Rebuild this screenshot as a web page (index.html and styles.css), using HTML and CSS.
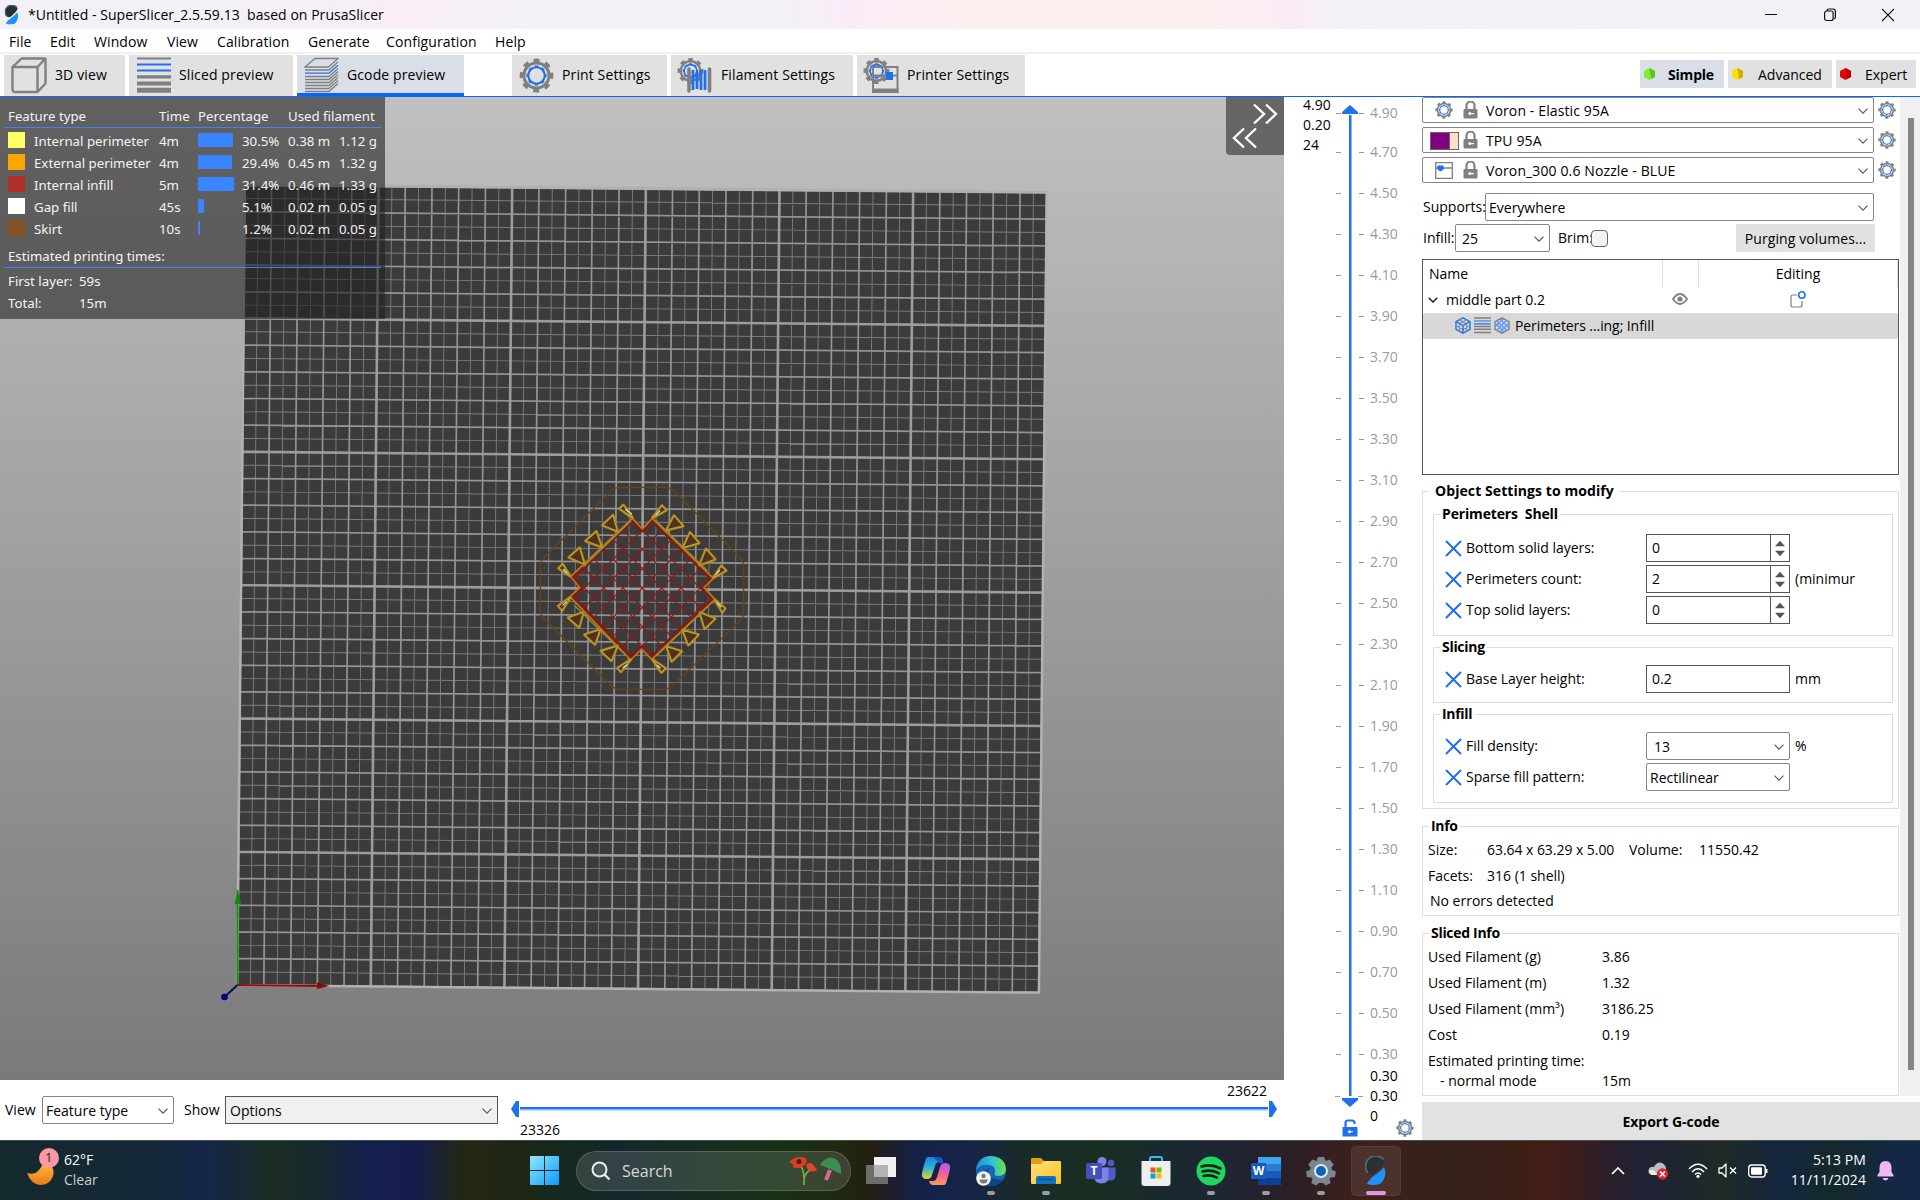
FILE: index.html
```html
<!DOCTYPE html>
<html lang="en">
<head>
<meta charset="utf-8">
<title>*Untitled - SuperSlicer_2.5.59.13 based on PrusaSlicer</title>
<link rel="stylesheet" href="styles.css">
</head>
<body>
<svg class="sprite" width="0" height="0">
  <defs>
    <symbol id="gear" viewBox="0 0 34 34">
      <circle cx="17" cy="17" r="14.6" fill="none" stroke="#808080" stroke-width="3.6" stroke-dasharray="5.6 5.867" transform="rotate(-101 17 17)"/>
      <circle cx="17" cy="17" r="12.2" fill="none" stroke="#808080" stroke-width="3"/>
      <circle cx="17" cy="17" r="8" fill="none" stroke="#1f70ee" stroke-width="2"/>
      <circle cx="17" cy="17" r="9" fill="none" stroke="#1f70ee" stroke-width="1.6" stroke-dasharray="3.4 3.669" transform="rotate(-101 17 17)"/>
    </symbol>
    <symbol id="lock" viewBox="0 0 15 18">
      <path d="M3.5 8V4.5a4 4 0 0 1 8 0V8" fill="none" stroke="#808080" stroke-width="2.2"/>
      <rect x="0.5" y="8" width="14" height="9.5" rx="1" fill="#808080"/>
      <circle cx="6.8" cy="12.6" r="1.5" fill="#fff"/><path d="M7 12h4v1.2H7z" fill="#fff"/>
    </symbol>
    <symbol id="chev" viewBox="0 0 10 6"><path d="M.5.7 5 5.2 9.500.7" fill="none" stroke="#555" stroke-width="1.1"/></symbol>
    <symbol id="cross" viewBox="0 0 17 17"><path d="M1 1l15 15M16 1 1 16" fill="none" stroke="#1f70ee" stroke-width="2"/></symbol>
    <symbol id="logo" viewBox="0 0 22 30">
      <path d="M18.500 3.500A9.300 9.300 0 0 0 3 17q4 3.500 9-2 5-4 7.500-9z" fill="#2d2f33"/>
      <path d="M18.500 3.500A9.300 9.300 0 0 0 3 17" fill="none" stroke="#4d6f80" stroke-width="1.600"/>
      <path d="M19 11q4 10-4 17-7 2-13 0 2-5 8-9 6-4 9-8z" fill="#1f93f7"/>
    </symbol>
    <symbol id="hex" viewBox="0 0 16 17">
      <path d="M8 .8 15 4.700v7.600L8 16.200 1 12.300V4.700z" fill="#d5dceb" stroke="#1f70ee" stroke-width="1.400"/>
      <path d="M4.500 2.800l7 4v7.400M11.500 2.800l-7 4v7.400M1 8.500l7 4 7-4" fill="none" stroke="#8b8b8b" stroke-width="1.200"/>
      <path d="M1 4.700 8 8.500l7-3.800M8 8.500v7.700" fill="none" stroke="#1f70ee" stroke-width="1.400"/>
    </symbol>
    <linearGradient id="win" x1="0" y1="0" x2="1" y2="1"><stop offset="0" stop-color="#8fe6ff"/><stop offset="1" stop-color="#0a9bff"/></linearGradient>
    <linearGradient id="moon" x1="0" y1="0" x2="0" y2="1"><stop offset="0" stop-color="#f7c443"/><stop offset="1" stop-color="#f1781b"/></linearGradient>
    <linearGradient id="fold" x1="0" y1="0" x2="1" y2="1"><stop offset="0" stop-color="#ffe07a"/><stop offset="1" stop-color="#ffc125"/></linearGradient>
    <linearGradient id="cpa" x1="0" y1="0" x2="0" y2="1"><stop offset="0" stop-color="#1d7fe8"/><stop offset=".5" stop-color="#2fb6d0"/><stop offset="1" stop-color="#f2d324"/></linearGradient>
    <linearGradient id="cpb" x1="0" y1="0" x2="0" y2="1"><stop offset="0" stop-color="#a95cf0"/><stop offset=".5" stop-color="#f0609a"/><stop offset="1" stop-color="#fb9a5a"/></linearGradient>
    <linearGradient id="edg" x1="0" y1="0" x2="1" y2="0"><stop offset="0" stop-color="#1b8fdc"/><stop offset=".55" stop-color="#2fc5cf"/><stop offset="1" stop-color="#6fe04a"/></linearGradient>
  </defs>
</svg>

<header class="titlebar">
  <svg class="app-ico" viewBox="0 0 22 30"><use href="#logo"/></svg>
  <span class="title">*Untitled - SuperSlicer_2.5.59.13&nbsp; based on PrusaSlicer</span>
  <div class="winctl">
    <svg viewBox="0 0 12 14"><path d="M0 6.500h12" stroke="#111"/></svg>
    <svg viewBox="0 0 12 14"><rect x=".6" y="3" width="8.500" height="9.500" rx="2" fill="none" stroke="#111" stroke-width="1.200"/><path d="M3 3V2.500Q3 1 5 1h4q2.400 0 2.400 2.400V9q0 1.700-1.500 1.900" fill="none" stroke="#111" stroke-width="1.200"/></svg>
    <svg viewBox="0 0 12 14"><path d="M0 1l12 12M12 1 0 13" stroke="#111" stroke-width="1.200"/></svg>
  </div>
</header>

<nav class="menu">
  <span class="m1">File</span><span class="m2">Edit</span><span class="m3">Window</span><span class="m4">View</span><span class="m5">Calibration</span><span class="m6">Generate</span><span class="m7">Configuration</span><span class="m8">Help</span>
</nav>

<div class="tabs">
  <div class="tab t3d"><svg width="36" height="37" viewBox="0 0 36 37"><path d="M1.500 10h25v25H4q-2.500 0-2.500-2.500zM1.500 10l9-8.500h24M26.500 10l8-8.500v25l-8 8.500" fill="none" stroke="#808080" stroke-width="2.400" stroke-linejoin="round"/></svg>3D view</div>
  <div class="tab tsl"><svg width="34" height="36" viewBox="0 0 34 36"><path d="M0 1.500h34M0 19.500h34" stroke="#808080" stroke-width="2"/><path d="M0 7.500h34M0 13.500h34" stroke="#1f70ee" stroke-width="2.200"/><path d="M0 20h34" stroke="#808080" stroke-width="3"/><path d="M0 26.500h34" stroke="#808080" stroke-width="4"/><path d="M0 33.300h34" stroke="#808080" stroke-width="5"/></svg>Sliced preview</div>
  <div class="tab tgc on"><svg width="35" height="36" viewBox="0 0 35 36"><path d="M1 10 11 1.500h23L24.500 10z" fill="none" stroke="#808080" stroke-width="1.300"/><path d="M1 13h24l9-8M1 19.500h24l9-8M1 22.500h24l9-8M1 25.500h24l9-8M1 28.500h24l9-8M1 31.500h24l9-8M1 34.500h24l9-8" fill="none" stroke="#808080" stroke-width="1.300"/><path d="M1 16.200h24l9-8" fill="none" stroke="#1f70ee" stroke-width="1.300"/></svg>Gcode preview</div>
  <div class="tab tpr"><svg width="35" height="35"><use href="#gear"/></svg>Print Settings</div>
  <div class="tab tfi"><svg width="36" height="37" viewBox="0 0 36 37"><svg width="27" height="28" x="0" y="0"><use href="#gear"/></svg><path d="M12 12v22M32.500 12v22" stroke="#808080" stroke-width="3.600" stroke-linecap="round"/><path d="M16 13v20M20 15v17M24 13v20M28 13v20" stroke="#1f70ee" stroke-width="2.800"/></svg>Filament Settings</div>
  <div class="tab tpt"><svg width="36" height="37" viewBox="0 0 36 37"><svg width="27" height="28" x="0" y="0"><use href="#gear"/></svg><path d="M10 10h24.500v25H10zM10 18.500h24" fill="none" stroke="#808080" stroke-width="2"/><path d="M9 33.500h26.500" stroke="#808080" stroke-width="4"/><path d="M23 15h7v8h-7z" fill="#1f70ee"/></svg>Printer Settings</div>
  <div class="modes">
    <div class="mode ms on"><svg viewBox="0 0 11 12"><path d="M5.500 0 11 3v6l-5.500 3L0 9V3z" fill="#7fee2c"/><path d="M5.500 0 11 3v6L7 11z" fill="#61c41d"/></svg>Simple</div>
    <div class="mode ma"><svg viewBox="0 0 11 12"><path d="M5.500 0 11 3v6l-5.500 3L0 9V3z" fill="#ffdc0a"/><path d="M5.500 0 11 3v6L7 11z" fill="#d1ad00"/></svg>Advanced</div>
    <div class="mode me"><svg viewBox="0 0 11 12"><path d="M5.500 0 11 3v6l-5.500 3L0 9V3z" fill="#e60505"/><path d="M5.500 0 11 3v6L7 11z" fill="#bd0000"/></svg>Expert</div>
  </div>
</div>

<main class="work">
  <section class="left">
    <div class="canvas">
      <svg class="scene" viewBox="0 97 1284 983">
        <defs>
          <clipPath id="body"><path d="M397 205 427 237 457 205 640 385 612 413 645 448 455 628 425 597 392 630 210 440 240 413 212 380z"/></clipPath>
          <path id="tails" d="M500 240l22-43 27 31zM549 293l21-45 27 31zM599 345l19-48 27 31zM352 243l-13-47-31 30zM305 291l-16-46-32 28zM253 342l-14-48-32 28zM250 487l-45 16 32 29zM300 539l-46 15 31 29zM352 588l-49 15 31 29zM500 590l45 14-30 30zM548 540l47 14-30 31zM600 488l45 18-31 30zM397 203l-38-27 11-11zM458 203l28-36 12 14zM640 383l24-35 14 14zM645 450l30 25-8 12zM210 378l-34-23 12-12zM211 442l-36 26 12 13zM392 629l-39 25 10 11zM458 629l38 26-12 12z"/>
        </defs>
        <g transform="matrix(13.365 .125 -.13 13.337 244.900 185)">
          <path d="M0 0h60v60H0z" fill="#3b3b3b"/>
          <g stroke="#a0a0a0" fill="none">
            <path d="M-.035 30H60M30-.035V60" stroke-width="60" stroke-dasharray=".07 .93" stroke-opacity=".66"/>
            <path d="M-.065 30H60M30-.065V60" stroke-width="60" stroke-dasharray=".13 1.870" stroke-opacity=".75"/>
            <path d="M-.1 30H60M30-.1V60" stroke-width="60" stroke-dasharray=".2 9.800" stroke-opacity=".85"/>
          </g>
          <path d="M0 0h60v60H0z" fill="none" stroke="#b2b2b2" stroke-width=".17"/>
        </g>
        <g transform="translate(500 450) scale(.33333)" fill="none" stroke-linejoin="round">
          <path d="M360 112H495Q510 112 520 121L722 324Q731 334 731 350V490Q731 502 722 511L519 706Q505 718 490 718H360Q345 718 332 706L130 504Q121 494 121 482V350Q121 335 129 325L336 121Q345 112 360 112z" stroke="#66421d" stroke-width="4"/>
          <g clip-path="url(#body)">
            <g transform="translate(427 414) rotate(45)" stroke="#861c1c">
              <path d="M-165.700 0H170M0-165.700V170" stroke-width="340" stroke-dasharray="3.600 37.400"/>
            </g>
            <path d="M397 205 427 237 457 205 640 385 612 413 645 448 455 628 425 597 392 630 210 440 240 413 212 380z" stroke="#7c1d1a" stroke-width="20"/>
          </g>
          <path d="M397 205 427 237 457 205 640 385 612 413 645 448 455 628 425 597 392 630 210 440 240 413 212 380z" stroke="#b87a12" stroke-width="5"/>
          <use href="#tails" fill="#3b3b2a" stroke="#c67c0a" stroke-width="9"/>
          <use href="#tails" fill="#54301f" stroke="#a8a238" stroke-width="4"/>
          <path d="M393 212 250 350M468 212 622 362M622 470 468 618M380 618 225 468" stroke="#96912f" stroke-width="4"/>
          <path d="M376 178l20 14M480 182l-13 14M660 360l-12 14M652 458l12 14M190 357l12 13M188 467l12-13M368 654l14-10M482 655l-12-10" stroke="#d6d6c0" stroke-width="4"/>
        </g>
        <path d="M237.500 985V890" stroke="#0f9411" stroke-width="2"/><path d="M234.500 904 238 891.500 241.500 904z" fill="#0f8411"/>
        <path d="M237.500 985 318 986" stroke="#9c0808" stroke-width="2"/><path d="M317 982.500 329 986 317 989z" fill="#8a0808"/>
        <path d="M237.500 985 224.500 997" stroke="#0a0a6e" stroke-width="2"/><circle cx="224.500" cy="997" r="3.300" fill="#00008a"/>
      </svg>
      <div class="legend">
        <div class="lrow lh"><span>Feature type</span><span>Time</span><span>Percentage</span><span class="uf">Used filament</span></div>
        <div class="lrow"><i class="sw c1"></i><span>Internal perimeter</span><span>4m</span><b style="width:35px"></b><span>30.5%</span><span>0.38 m</span><span>1.12 g</span></div>
        <div class="lrow"><i class="sw c2"></i><span>External perimeter</span><span>4m</span><b style="width:34px"></b><span>29.4%</span><span>0.45 m</span><span>1.32 g</span></div>
        <div class="lrow"><i class="sw c3"></i><span>Internal infill</span><span>5m</span><b style="width:36px"></b><span>31.4%</span><span>0.46 m</span><span>1.33 g</span></div>
        <div class="lrow"><i class="sw c4"></i><span>Gap fill</span><span>45s</span><b style="width:6px"></b><span>5.1%</span><span>0.02 m</span><span>0.05 g</span></div>
        <div class="lrow"><i class="sw c5"></i><span>Skirt</span><span>10s</span><b style="width:1.500px"></b><span>1.2%</span><span>0.02 m</span><span>0.05 g</span></div>
        <div class="est">Estimated printing times:</div>
        <div class="tot"><span>First layer:</span><span>59s</span></div>
        <div class="tot"><span>Total:</span><span>15m</span></div>
      </div>
      <div class="fold"><svg width="58" height="58" viewBox="0 0 58 58"><path d="M28 7.500 38 17 28 26.500M40 7.500 50 17 40 26.500M18 31.500 8 41l10 9.500M30 31.500 20 41l10 9.500" fill="none" stroke="#fff" stroke-width="2.400"/></svg></div>
    </div>
    <div class="viewbar">
      <span class="lbl v">View</span><div class="combo cv">Feature type<svg><use href="#chev"/></svg></div>
      <span class="lbl s">Show</span><div class="combo co">Options<svg><use href="#chev"/></svg></div>
      <div class="hslider"><span class="hi">23622</span>
        <svg width="766" height="16" viewBox="0 0 766 16"><path d="M8 0v16H5L0 8l5-8zM758 0v16h3l5-8-5-8z" fill="#1f70ee"/><path d="M9 6h748v2H9z" fill="#1f70ee"/><path d="M9 8h748v1.500H9z" fill="#8fb8f8"/></svg>
        <span class="lo">23326</span></div>
    </div>
  </section>

  <section class="vslider">
    <div class="cur"><span>4.90</span><span>0.20</span><span>24</span></div>
    <ul class="scale"><li>4.90</li><li>4.70</li><li>4.50</li><li>4.30</li><li>4.10</li><li>3.90</li><li>3.70</li><li>3.50</li><li>3.30</li><li>3.10</li><li>2.90</li><li>2.70</li><li>2.50</li><li>2.30</li><li>2.10</li><li>1.90</li><li>1.70</li><li>1.50</li><li>1.30</li><li>1.10</li><li>0.90</li><li>0.70</li><li>0.50</li><li>0.30</li></ul>
    <svg class="track" width="30" height="1004" viewBox="0 0 30 1004"><path d="M7 9V7l8-7 8 7v2zM7 993v2l8 7 8-7v-2z" fill="#1f70ee"/><path d="M14 10h2v981h-2z" fill="#1f70ee"/><path d="M16 10h1v981h-1z" fill="#8fb8f8"/><path d="M0 991.500h5M23 991.500h5" stroke="#999"/></svg>
    <div class="low"><span>0.30</span><span>0.30</span><span>0</span></div>
    <div class="vicons"><svg width="16" height="18" viewBox="0 0 16 18"><path d="M3.500 8V4q0-2.500 2.500-2.500h4q2.500 0 2.500 2.500v1" fill="none" stroke="#1f70ee" stroke-width="2.200"/><path d="M.5 8h15v9.500H.5z" fill="#1f70ee"/><circle cx="7.500" cy="12.700" r="1.500" fill="#fff"/><path d="M8 12.200h3v1H8z" fill="#fff"/></svg><svg width="18" height="18"><use href="#gear"/></svg></div>
  </section>

  <aside class="side">
    <div class="scrollarea">
      <div class="content">
        <div class="prow"><div class="combo preset"><svg class="pi" width="18" height="18"><use href="#gear"/></svg><svg class="lk"><use href="#lock"/></svg>Voron - Elastic 95A<svg><use href="#chev"/></svg></div><svg class="pg"><use href="#gear"/></svg></div>
        <div class="prow"><div class="combo preset"><i class="fil"></i><svg class="lk"><use href="#lock"/></svg>TPU 95A<svg><use href="#chev"/></svg></div><svg class="pg"><use href="#gear"/></svg></div>
        <div class="prow"><div class="combo preset"><svg class="pi" width="18" height="17" viewBox="0 0 18 17"><path d="M.7.700h16.600v15.600H.7zM1 6h16" fill="none" stroke="#808080" stroke-width="1.300"/><path d="M2.500 3.500h6v4L5.500 9.500l-3-2z" fill="#1f70ee"/></svg><svg class="lk"><use href="#lock"/></svg>Voron_300 0.6 Nozzle - BLUE<svg><use href="#chev"/></svg></div><svg class="pg"><use href="#gear"/></svg></div>
        <div class="srow"><span>Supports:</span><div class="combo sup">Everywhere<svg><use href="#chev"/></svg></div></div>
        <div class="irow"><span class="il">Infill:</span><div class="combo inf">25<svg><use href="#chev"/></svg></div><span class="bl">Brim:</span><i class="chk"></i><div class="btn">Purging volumes...</div></div>
        <div class="tree">
          <div class="th"><span class="n">Name</span><span class="e"></span><span class="d">Editing</span></div>
          <div class="tr"><svg class="tw" viewBox="0 0 10 6"><path d="M.7.800 5 5 9.300.8" fill="none" stroke="#222" stroke-width="1.500"/></svg><span class="n">middle part 0.2</span>
            <svg class="eye" viewBox="0 0 16 12"><path d="M1 6q7-10 14 0-7 10-14 0z" fill="none" stroke="#808080" stroke-width="1.800"/><circle cx="8" cy="6" r="2.600" fill="#808080"/></svg>
            <svg class="edit" viewBox="0 0 16 17"><path d="M7 4H3Q1 4 1 6v8q0 2 2 2h7q2 0 2-2v-4" fill="none" stroke="#808080" stroke-width="1.200"/><circle cx="11.800" cy="4" r="3.200" fill="none" stroke="#1f70ee" stroke-width="1.600"/></svg></div>
          <div class="tr sel"><svg width="16" height="17"><use href="#hex"/></svg><svg width="17" height="17" viewBox="0 0 17 17"><path d="M0 1h17M0 9.500h17M0 12.300h17M0 15.500h17" stroke="#808080" stroke-width="1.500"/><path d="M0 4h17M0 6.800h17" stroke="#1f70ee" stroke-width="1.200"/></svg><svg width="16" height="17" viewBox="0 0 16 17"><path d="M8 .8 15 4.700v7.600L8 16.200 1 12.300V4.700z" fill="#cfdaf0" stroke="#808080" stroke-width="1.400"/><path d="M3 4l10 10M6 2l8 8M2 7l8 8M13 3 3 13M9 2 2 9M14 7l-8 8" stroke="#5b93ee" stroke-width="1.100"/></svg><span>Perimeters ...ing; Infill</span></div>
        </div>
        <div class="group obj"><div class="gt">Object Settings to modify</div>
          <div class="group per"><div class="gt">Perimeters&nbsp; Shell</div>
            <div class="frow"><svg class="x"><use href="#cross"/></svg><span>Bottom solid layers:</span><div class="fld spin">0<svg viewBox="0 0 11 17"><path d="M0 6 5.500 0 11 6zM0 11l5.500 6L11 11z" fill="#555"/></svg></div></div>
            <div class="frow"><svg class="x"><use href="#cross"/></svg><span>Perimeters count:</span><div class="fld spin">2<svg viewBox="0 0 11 17"><path d="M0 6 5.500 0 11 6zM0 11l5.500 6L11 11z" fill="#555"/></svg></div><em>(minimur</em></div>
            <div class="frow"><svg class="x"><use href="#cross"/></svg><span>Top solid layers:</span><div class="fld spin">0<svg viewBox="0 0 11 17"><path d="M0 6 5.500 0 11 6zM0 11l5.500 6L11 11z" fill="#555"/></svg></div></div>
          </div>
          <div class="group sli"><div class="gt">Slicing</div>
            <div class="frow"><svg class="x"><use href="#cross"/></svg><span>Base Layer height:</span><div class="fld">0.2</div><em>mm</em></div>
          </div>
          <div class="group ifl"><div class="gt">Infill</div>
            <div class="frow"><svg class="x"><use href="#cross"/></svg><span>Fill density:</span><div class="combo f13">13<svg><use href="#chev"/></svg></div><em>%</em></div>
            <div class="frow"><svg class="x"><use href="#cross"/></svg><span>Sparse fill pattern:</span><div class="combo frl">Rectilinear<svg><use href="#chev"/></svg></div></div>
          </div>
        </div>
        <div class="group info"><div class="gt">Info</div>
          <div class="nrow"><span class="k">Size:</span><span class="sz">63.64 x 63.29 x 5.00</span><span class="vk">Volume:</span><span>11550.42</span></div>
          <div class="nrow"><span class="k">Facets:</span><span>316 (1 shell)</span></div>
          <div class="nrow ne">No errors detected</div>
        </div>
        <div class="group sinfo"><div class="gt">Sliced Info</div>
          <div class="nrow"><span class="w">Used Filament (g)</span><span>3.86</span></div>
          <div class="nrow"><span class="w">Used Filament (m)</span><span>1.32</span></div>
          <div class="nrow"><span class="w">Used Filament (mm³)</span><span>3186.25</span></div>
          <div class="nrow"><span class="w">Cost</span><span>0.19</span></div>
          <div class="nrow"><span class="w">Estimated printing time:</span></div>
          <div class="nrow nm"><span class="w">- normal mode</span><span>15m</span></div>
        </div>
      </div>
      <div class="sbar"><i></i></div>
    </div>
    <div class="export">Export G-code</div>
  </aside>
</main>

<footer class="taskbar">
  <div class="weather"><svg width="38" height="48" viewBox="0 0 38 48"><path d="M3 28q12 4 17-13 12 7 9 16-3 9-13 9-9-1-13-12z" fill="url(#moon)"/><circle cx="25" cy="13" r="10" fill="#ff96a3"/></svg><span class="badge">1</span><div class="wt"><span>62°F</span><span>Clear</span></div></div>
  <svg class="start" viewBox="0 0 29 29"><path d="M1 0h13v14H0V1q0-1 1-1zM15 0h13q1 0 1 1v13H15zM0 15h14v14H1q-1 0-1-1zM15 15h14v13q0 1-1 1H15z" fill="url(#win)"/></svg>
  <div class="search"><svg width="20" height="20" viewBox="0 0 20 20"><circle cx="8.500" cy="8.500" r="7" fill="rgba(255,255,255,.1)" stroke="#e8ecec" stroke-width="2"/><path d="M13.500 13.500 18.500 18.500" stroke="#e8ecec" stroke-width="2.400"/></svg><span>Search</span>
    <svg class="flower" width="54" height="32" viewBox="0 0 54 32"><path d="M12 9q5 8 4 21M23 14q-6 4-7 10" fill="none" stroke="#7dae3c" stroke-width="1.600"/><path d="M1 7Q8 0 18 3q2 5-3 8-6 4-10 1 1-3-4-5z" fill="#e23a1e"/><path d="M18 10q5-6 11 5-5 3-9 0z" fill="#e5452a"/><circle cx="11" cy="6.500" r="2.500" fill="#40202a"/><path d="M42 15l-4 10" stroke="#d86a8c" stroke-width="4"/><path d="M32 10Q40-2 49 5q5 6 4 14-10-5-21-9z" fill="#3c8c54"/></svg></div>
  <div class="apps">
    <div class="app"><svg viewBox="0 0 30 30"><path d="M0 9h22v19H0z" fill="#6d6d6d"/><path d="M8 1h22v20H8z" fill="#f1f1f1"/><path d="M8 9h14v12H8z" fill="#b4b4b4"/></svg></div>
    <div class="app"><svg viewBox="0 0 30 30"><path d="M7 1h11q3 0 4 5h-4q-3 0-4 4l-3 9q-1 4-5 4-6 0-5-6 1-5 3-11 1-5 3-5z" fill="url(#cpa)"/><path d="M23 29H12q-3 0-4-4h4q3 0 4-4l3-10q1-4 5-4 6 0 5 6-1 5-3 11-1 5-3 5z" fill="url(#cpb)"/><path d="M12 1h6q3 0 4 6h-4z" fill="#1657c8"/></svg></div>
    <div class="app run"><svg viewBox="0 0 30 30"><circle cx="15" cy="15" r="15" fill="#1267b4"/><path d="M0 14Q2 0 15 0q14 1 15 13 0 7-8 7-5 0-3-4 1-6-6-7Q5 8 0 14z" fill="url(#edg)"/><path d="M13 12q-3 6 3 10 6 3 12 1-4 6-11 7-9-2-10-9 0-6 6-9z" fill="#0d4585"/><circle cx="7.500" cy="22.500" r="7.300" fill="#f4f4f4"/><circle cx="7.500" cy="20" r="2.200" fill="#777"/><path d="M3.500 23.500h8q0 4-4 4t-4-4z" fill="#777"/></svg></div>
    <div class="app run"><svg viewBox="0 0 30 30"><path d="M0 3q0-1 1-1h9l3 3h5v6H0z" fill="#e0a010"/><path d="M0 8h10l3-3h16q1 0 1 1v21q0 1-1 1H1q-1 0-1-1z" fill="url(#fold)"/><path d="M5 28v-6q0-2 2-2h16q2 0 2 2v6z" fill="#1273c0"/><path d="M8 23.500h14" stroke="#0a4f94" stroke-width="1.500"/></svg></div>
    <div class="app"><svg viewBox="0 0 30 30"><circle cx="16" cy="5.500" r="4.500" fill="#7b83eb"/><circle cx="25" cy="7" r="3.200" fill="#5059c9"/><path d="M18 11.500h11.500v8q0 5-5 5H18z" fill="#5059c9"/><path d="M9 11.500h13.500v9q0 7-7 7t-7-7z" fill="#7b83eb"/><rect y="7" width="16" height="16" rx="1.500" fill="#464eb8"/><text x="8" y="19" class="ic">T</text></svg></div>
    <div class="app"><svg viewBox="0 0 30 30"><path d="M9 6V2.500Q9 1 10.500 1h9Q21 1 21 2.500V6" fill="none" stroke="#2fbcf0" stroke-width="2"/><path d="M.5 5h29v22q0 3-3 3h-23q-3 0-3-3z" fill="#efefef"/><path d="M9.500 11.500h5v5h-5z" fill="#f25022"/><path d="M15.500 11.500h5v5h-5z" fill="#7fba00"/><path d="M9.500 17.500h5v5h-5z" fill="#00a4ef"/><path d="M15.500 17.500h5v5h-5z" fill="#ffb900"/></svg></div>
    <div class="app run"><svg viewBox="0 0 30 30"><circle cx="15" cy="15" r="14.500" fill="#1ed760"/><path d="M5.500 10.500q10-3 19 2M6.500 15.500q9-2.500 16.500 1.800M7.500 20q7-1.800 13.500 1.700" fill="none" stroke="#142414" stroke-width="2.600" stroke-linecap="round"/></svg></div>
    <div class="app run"><svg viewBox="0 0 30 30"><path d="M7 1h22q1 0 1 1v26q0 1-1 1H7z" fill="#2b7cd3"/><path d="M7 1h22q1 0 1 1v6H7z" fill="#41a5ee"/><path d="M7 15h23v7H7z" fill="#185abd"/><path d="M7 22h23v6q0 1-1 1H7z" fill="#103f91"/><rect y="7" width="15" height="16" rx="1" fill="#185abd"/><text x="7.500" y="19" class="ic">W</text></svg></div>
    <div class="app run"><svg viewBox="0 0 30 30"><path d="M12 1h6l1.500 4 4.200-1.500 4 5-2.500 3.500 1 2 3.800 1.500-1 5.500-4.500.5-1 1.500 1.200 4-5 2.500L17 27h-4l-2.700 2.500-5-2.500 1.200-4-1-1.500-4.500-.5L0 15.500 3.800 14l1-2L2.300 8.500l4-5L10.500 5z" fill="#7c868f"/><circle cx="15" cy="15" r="7" fill="#e4e9ee"/><circle cx="15" cy="15" r="5" fill="#0a63b5"/></svg></div>
    <div class="app run act"><svg viewBox="-4 0 30 30"><use href="#logo" width="22" height="30"/></svg></div>
  </div>
  <div class="tray">
    <svg class="y1" width="14" height="9" viewBox="0 0 14 9"><path d="M1 8l6-6 6 6" fill="none" stroke="#fff" stroke-width="1.700"/></svg>
    <svg class="y2" width="21" height="18" viewBox="0 0 21 18"><path d="M5 13q-5 0-4.500-5Q2 4 6 5q3-6 8-4 4 2 4 6v6z" fill="#b9bdc3"/><path d="M1 9q5-3 8 4H4q-3-1-3-4z" fill="#eee"/><circle cx="14.500" cy="12" r="5.700" fill="#d92632"/><path d="M12 9.500l5 5M17 9.500l-5 5" stroke="#fff" stroke-width="1.600"/></svg>
    <svg class="y3" width="20" height="15" viewBox="0 0 20 15"><path d="M1 6q9-9.500 18 0M4 9q6-6.500 12 0M7 11.600q3-3.200 6 0" fill="none" stroke="#fff" stroke-width="1.500"/><circle cx="10" cy="13.300" r="1.600" fill="#fff"/></svg>
    <svg class="y4" width="20" height="15" viewBox="0 0 20 15"><path d="M1 5h3l4-4v13l-4-4H1z" fill="none" stroke="#fff" stroke-width="1.300" stroke-linejoin="round"/><path d="M12 4.500l6 6M18 4.500l-6 6" stroke="#fff" stroke-width="1.300"/></svg>
    <svg class="y5" width="20" height="14" viewBox="0 0 20 14"><rect x=".7" y="1" width="16.500" height="12" rx="3" fill="none" stroke="#fff" stroke-width="1.400"/><rect x="3" y="3.300" width="11" height="7.400" rx="1" fill="#fff"/><path d="M18.500 5v4" stroke="#fff" stroke-width="2"/></svg>
    <div class="clock"><span>5:13 PM</span><span>11/11/2024</span></div>
    <svg class="y6" width="17" height="20" viewBox="0 0 17 20"><path d="M8.500 0q6 0 6 7v4l2 3v1.500H.5V14l2-3V7q0-7 6-7zM5.500 17h6q-1 2.500-3 2.500t-3-2.500z" fill="#f0b8f2"/></svg>
  </div>
</footer>
</body>
</html>
```
FILE: styles.css
```css
* { box-sizing: border-box; }
body { margin: 0; width: 1920px; height: 1200px; overflow: hidden; background: #fff; color: #000; font: 14px/20px "Open Sans", "Noto Sans", sans-serif; }
svg { display: block; flex: none; }
i, b, em { font-style: normal; }
span, .tab, .mode, .combo, .gt { white-space: pre; }
.sprite { position: absolute; }

.titlebar { display: flex; align-items: center; height: 29px; padding: 0 26px 0 4px; background: linear-gradient(90deg, #f1f1f7 0, #f3f0f8 250px, #f9edf6 400px, #f3f1f7 540px, #f3f0f7 780px, #f9ecf8 850px, #fbefef 960px, #fbeff0 1220px, #f9ecf6 1290px, #f2f2f8 1360px, #f1f1f7 100%); }
.app-ico { width: 16px; height: 20px; }
.title { margin-left: 8px; letter-spacing: .04px; }
.winctl { display: flex; gap: 46.500px; margin-left: auto; }
.winctl svg { width: 12px; height: 14px; }

.menu { display: flex; align-items: center; height: 25px; padding: 2px 0 0 9px; border-bottom: 2px solid #f0f0f0; letter-spacing: .1px; }
.menu span { flex: none; }
.m1 { width: 41px; } .m2 { width: 44px; } .m3 { width: 73px; } .m4 { width: 50px; } .m5 { width: 91px; } .m6 { width: 78px; } .m7 { width: 109px; }

.tabs { display: flex; height: 43px; padding: 1px 4px 0; gap: 4px; border-bottom: 1px solid #0a64f5; }
.tab { display: flex; align-items: center; height: 41px; background: #e1e1e1; padding: 0 0 1px 7px; letter-spacing: .12px; }
.tab svg { margin-right: 8px; }
.t3d { width: 121px; } .tsl { width: 164px; padding-left: 8px; } .tgc { width: 167px; }
.tab.on { background: #d9dee7; border-bottom: 3px solid #0a64f5; padding: 2px 0 0 7px; }
.tpr { width: 155px; margin-left: 44px; } .tfi { width: 182px; padding-left: 6px; } .tpt { width: 168px; padding-left: 6px; }
.modes { display: flex; gap: 4px; margin: 5px 0 0 auto; }
.mode { display: flex; align-items: center; height: 28px; background: #e1e1e1; padding: 1px 0 0 4px; }
.mode svg { width: 11px; height: 12px; margin-top: -1px; }
.mode.on { background: #d9dee7; font-weight: 700; letter-spacing: -.2px; }
.ms { width: 84px; } .ms svg { margin-right: 13px; } .ma { width: 104px; } .ma svg { margin-right: 15px; } .me { width: 80px; } .me svg { margin-right: 14px; }

.work { display: grid; grid-template-columns: 1284px 138px 498px; height: 1043px; }
.canvas { position: relative; height: 983px; background: linear-gradient(#c0c0c0, #7a7a7a); }
.scene { width: 1284px; height: 983px; }
.legend { position: absolute; left: 0; top: 0; width: 385px; height: 222px; padding: 7px 4px 0; background: rgba(34,34,34,.6); color: #f4f4f4; font-family: "Noto Sans", sans-serif; font-size: 13.250px; line-height: 22px; }
.lrow { display: grid; grid-template-columns: 26px 125px 39px 44px 46px 51px 1fr; height: 22px; padding-left: 4px; align-items: center; }
.lrow b { height: 14px; background: #3a85ff; margin-top: -2px; }
.lh { grid-template-columns: 151px 39px 90px 1fr; border-bottom: 1px solid #3a85ff; height: 24px; margin: 0 0 2px; padding-bottom: 0; }
.sw { width: 17px; height: 16px; margin: -2px 0 0; }
.c1 { background: #ffff66; } .c2 { background: #ffa500; } .c3 { background: #b03029; } .c4 { background: #fff; } .c5 { background: #855423; }
.est { height: 25px; margin-top: 3px; padding: 2px 0 0 4px; border-bottom: 1px solid #3a85ff; }
.est + .tot { margin-top: 2px; }
.tot { display: grid; grid-template-columns: 71px 1fr; padding-left: 4px; height: 22px; }
.fold { position: absolute; right: 0; top: 0; width: 58px; height: 58px; background: #666; border-radius: 0 0 0 4px; }

.viewbar { display: flex; height: 60px; padding: 16px 0 0 5px; }
.lbl { line-height: 28px; } .v { width: 37px; } .s { width: 41px; margin-left: 10px; }
.combo { position: relative; display: flex; align-items: center; height: 28px; border: 1px solid #858585; border-radius: 2px; background: #fff; padding: 1px 0 0 3px; }
.combo > svg { margin-top: -1px; }
.combo > svg:last-child { width: 10px; height: 6px; margin: 0 5px 0 auto; }
.cv { width: 132px; } .co { width: 273px; background: #f0f0f0; border-color: #555; border-radius: 0; padding-left: 4px; }
.hslider { display: flex; flex-direction: column; width: 766px; margin: -14px 0 0 13px; }
.hi { align-self: flex-end; margin-right: 10px; height: 22px; line-height: 18px; } .lo { margin: 3px 0 0 9px; }

.vslider { position: relative; display: flex; flex-direction: column; }
.cur { position: absolute; left: 19px; top: -2px; display: flex; flex-direction: column; }
.scale { list-style: none; margin: 0; padding: 0; color: #9a9a9a; }
.scale li { display: grid; grid-template-columns: 23px 11px 1fr; align-items: center; height: 41px; padding-left: 52px; }
.scale li:first-child { height: 37px; margin-top: -3px; }
.scale li::before { content: ""; width: 5px; height: 1px; margin-top: 2px; background: #999; }
.scale li::after { content: ""; grid-column: 2; grid-row: 1; width: 5px; height: 1px; margin-top: 2px; background: #999; }
.track { position: absolute; left: 51px; top: 8px; }
.low { display: flex; flex-direction: column; margin: -8px 0 0 86px; }
.vicons { display: flex; justify-content: space-between; align-items: center; width: 72px; margin: -7px 0 0 58px; }

.side { display: flex; flex-direction: column; height: 1043px; }
.scrollarea { display: flex; height: 999px; }
.content { width: 478px; }
.prow { display: flex; align-items: center; height: 26px; margin-bottom: 4px; }
.preset { width: 452px; height: 26px; padding-left: 12px; letter-spacing: .12px; }
.pi { margin-right: 10px; }
.fil { width: 29px; height: 18px; margin: 0 4px 0 -5px; border: 1px solid #666; background: linear-gradient(90deg, #800080 18px, #666 18px, #666 19px, #ffdfc4 19px); }
.lk { width: 15px; height: 18px; margin-right: 8px; }
.pg { width: 18px; height: 18px; margin-left: 4px; }
.srow { display: flex; align-items: center; margin-top: 10px; padding-left: 1px; }
.srow span { width: 62px; } .sup { width: 389px; }
.irow { display: flex; align-items: center; margin-top: 3px; padding-left: 1px; }
.il { width: 32px; } .inf { width: 95px; padding-left: 6px; } .bl { width: 33px; margin-left: 8px; }
.chk { width: 17px; height: 17px; border: 1px solid #666; border-radius: 4px; background: #f3f3f3; }
.btn { width: 139px; height: 28px; line-height: 29px; margin-left: auto; margin-right: 25px; background: #e1e1e1; text-align: center; white-space: pre; letter-spacing: .1px; }
.tree { width: 477px; height: 216px; margin-top: 7px; border: 1px solid #555; }
.th { display: flex; height: 27px; line-height: 27px; }
.th .n { width: 240px; padding-left: 6px; border-right: 1px solid #ddd; } .th .e { width: 36px; border-right: 1px solid #ddd; } .th .d { flex: 1; text-align: center; border-right: 1px solid #ddd; }
.tr { display: flex; align-items: center; height: 26px; }
.tw { width: 10px; height: 6px; margin: 0 8px 0 5px; } .tr .n { width: 225px; } .eye { width: 16px; height: 12px; margin: -3px 0 0 1px; } .edit { width: 16px; height: 17px; margin: -2px 0 0 102px; }
.tr.sel { background: #d8d8d8; padding-left: 32px; border-radius: 2px; gap: 3px; }
.tr.sel svg { margin-top: -2px; } .tr.sel span { margin-left: 2px; letter-spacing: -.08px; }

.group { border: 1px solid #dcdcdc; width: 477px; }
.gt { display: table; margin: -11px 0 0 6px; padding: 0 2px; background: #fff; font-weight: 700; letter-spacing: -.3px; }
.obj { height: 318px; margin-top: 16px; padding-left: 10px; } .obj > .gt { margin-left: -4px; padding: 0 6px; letter-spacing: .08px; }
.obj .group { width: 460px; }
.per { height: 122px; margin-top: 13px; } .per > .gt { letter-spacing: -.15px; } .sli { height: 56px; margin-top: 11px; } .ifl { height: 89px; margin-top: 11px; }
.frow { display: flex; align-items: center; height: 28px; margin: 0 0 3px 11px; }
.gt + .frow { margin-top: 8px; } .per .gt + .frow { margin-top: 10px; }
.frow .x { width: 17px; height: 17px; margin-right: 4px; } .frow span { width: 180px; letter-spacing: -.03px; } .frow em { margin-left: 5px; }
.fld, .frow .combo { width: 144px; height: 28px; border: 1px solid #555; }
.fld { display: flex; padding-left: 5px; line-height: 25px; }
.spin svg { width: 19px; height: 26px; padding: 5px 4px 4px; margin-left: auto; border-left: 1px solid #555; }
.frow .combo { border-color: #858585; } .f13 { padding-left: 7px; }
.info { height: 90px; margin-top: 17px; } .sinfo { height: 163px; margin-top: 17px; }
.nrow { display: flex; height: 26px; line-height: 26px; padding-left: 5px; }
.info .gt, .sinfo .gt { margin-bottom: 1px; }
.k { width: 59px; } .sz { width: 142px; letter-spacing: -.05px; } .vk { width: 70px; } .ne { padding-left: 7px; line-height: 24px; } .w { width: 174px; } .nm { padding-left: 17px; line-height: 14px; } .nm .w { width: 162px; }
.sbar { width: 20px; background: #f0f0f0; } .sbar i { display: block; width: 6px; height: 952px; margin: 21px 0 0 8px; background: #858585; }
.export { height: 38px; margin-top: 6px; background: #e2e2e2; text-align: center; line-height: 39px; font-weight: 700; letter-spacing: 0; }

.taskbar { display: flex; align-items: center; height: 60px; border-top: 1px solid #3f4d50; color: #fff; background: linear-gradient(90deg, #14292c 0, #15283a 165px, #15264a 200px, #1b2d22 275px, #15282e 320px, #141f50 370px, #161d4c 415px, #232712 465px, #1e2614 520px, #15291f 560px, #14272c 620px, #17301c 740px, #163216 770px, #22260f 850px, #231f12 870px, #14214a 920px, #162448 970px, #1a2a28 1020px, #182f22 1090px, #1a2930 1170px, #1f2432 1230px, #2b1f26 1290px, #40201a 1370px, #33221a 1450px, #421e16 1550px, #2f1e28 1600px, #1f2235 1645px, #1f2a26 1720px, #142540 1785px, #14292c 1830px, #132845 1900px); }
.weather { position: relative; display: flex; align-items: center; width: 530px; padding-left: 24px; }
.weather svg { margin-top: -4px; }
.badge { position: absolute; left: 45px; top: -1px; color: #222; font-size: 13px; line-height: 18px; }
.wt { display: flex; flex-direction: column; margin: -2px 0 0 2px; line-height: 20px; } .wt span + span { color: #c9d0d2; }
.start { width: 29px; height: 29px; }
.search { display: flex; align-items: center; width: 275px; height: 40px; margin-left: 17px; padding-left: 14px; border-radius: 20px; border: 1px solid rgba(255,255,255,.16); background: rgba(255,255,255,.13); color: #d4dad8; font-size: 16px; }
.search span { margin-left: 11px; } .flower { margin-left: auto; margin-right: 8px; }
.apps { display: flex; gap: 5px; margin-left: 5px; }
.app { position: relative; width: 50px; height: 50px; padding: 10px; border-radius: 5px; }
.app svg { width: 30px; height: 30px; overflow: visible; }
.app.run::after { content: ""; position: absolute; left: 21px; bottom: 1px; width: 8px; height: 4px; border-radius: 2px; background: #9c9da2; }
.app.act { background: rgba(255,255,255,.08); border: 1px solid rgba(255,255,255,.06); padding: 9px; } .app.act::after { left: 14px; width: 20px; bottom: 0; background: #d99be0; }
.ic { font: 700 12px "Open Sans", sans-serif; fill: #fff; text-anchor: middle; }
.tray { display: flex; align-items: center; margin-left: 210px; }
.y2 { margin-left: 23px; } .y3 { margin-left: 19px; } .y4 { margin-left: 10px; } .y5 { margin-left: 10px; }
.clock { display: flex; flex-direction: column; width: 98px; margin-top: -2px; text-align: right; line-height: 20px; letter-spacing: .1px; } .y6 { margin-left: 11px; }
```
